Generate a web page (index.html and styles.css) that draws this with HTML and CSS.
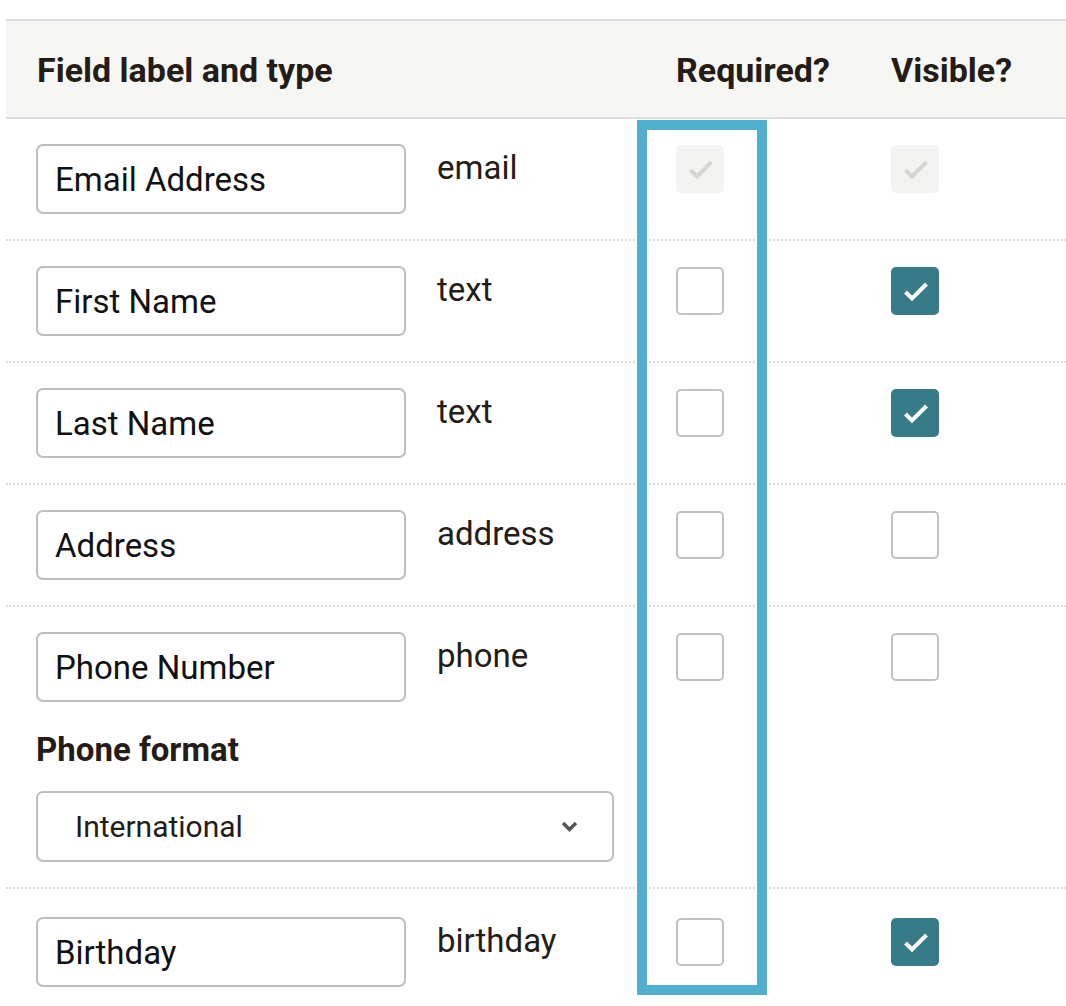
FILE: index.html
```html
<!DOCTYPE html>
<html lang="en">
<head>
<meta charset="utf-8">
<title>Form fields</title>
<link rel="stylesheet" href="styles.css">
</head>
<body>
<div class="form-table">
  <div class="thead">
    <div class="th th-label">Field label and type</div>
    <div class="th">Required?</div>
    <div class="th">Visible?</div>
  </div>

  <div class="row">
    <div class="cell label-cell">
      <div class="field-line"><div class="text-input">Email Address</div><span class="type">email</span></div>
    </div>
    <div class="cell"><span class="cb cb-disabled"><svg class="check" viewBox="0 0 48 48"><path d="M14.5 25 L21 31.5 L35.5 17"/></svg></span></div>
    <div class="cell"><span class="cb cb-disabled"><svg class="check" viewBox="0 0 48 48"><path d="M14.5 25 L21 31.5 L35.5 17"/></svg></span></div>
  </div>

  <div class="row">
    <div class="cell label-cell">
      <div class="field-line"><div class="text-input">First Name</div><span class="type">text</span></div>
    </div>
    <div class="cell"><span class="cb"></span></div>
    <div class="cell"><span class="cb cb-checked"><svg class="check" viewBox="0 0 48 48"><path d="M14.5 25 L21 31.5 L35.5 17"/></svg></span></div>
  </div>

  <div class="row">
    <div class="cell label-cell">
      <div class="field-line"><div class="text-input">Last Name</div><span class="type">text</span></div>
    </div>
    <div class="cell"><span class="cb"></span></div>
    <div class="cell"><span class="cb cb-checked"><svg class="check" viewBox="0 0 48 48"><path d="M14.5 25 L21 31.5 L35.5 17"/></svg></span></div>
  </div>

  <div class="row">
    <div class="cell label-cell">
      <div class="field-line"><div class="text-input">Address</div><span class="type">address</span></div>
    </div>
    <div class="cell"><span class="cb"></span></div>
    <div class="cell"><span class="cb"></span></div>
  </div>

  <div class="row">
    <div class="cell label-cell">
      <div class="field-line"><div class="text-input">Phone Number</div><span class="type">phone</span></div>
      <div class="sub-label">Phone format</div>
      <div class="select">
        <span>International</span>
        <svg class="chevron" viewBox="0 0 17 11"><path d="M2 2 L8.5 8.5 L15 2"/></svg>
      </div>
    </div>
    <div class="cell"><span class="cb"></span></div>
    <div class="cell"><span class="cb"></span></div>
  </div>

  <div class="row row-last">
    <div class="cell label-cell">
      <div class="field-line"><div class="text-input">Birthday</div><span class="type">birthday</span></div>
    </div>
    <div class="cell"><span class="cb"></span></div>
    <div class="cell"><span class="cb cb-checked"><svg class="check" viewBox="0 0 48 48"><path d="M14.5 25 L21 31.5 L35.5 17"/></svg></span></div>
  </div>

  <div class="highlight"></div>
</div>
</body>
</html>
```

FILE: styles.css
```css
html, body {
  margin: 0;
  padding: 0;
  background: #ffffff;
}

body {
  font-family: Roboto, "Liberation Sans", Arial, sans-serif;
  color: #241c15;
}

.form-table {
  position: relative;
  margin: 19px 0 0 6px;
}

.thead,
.row {
  display: grid;
  grid-template-columns: 670px 215px 1fr;
}

.thead {
  background: #f6f6f4;
  border-top: 2px solid #dedede;
  border-bottom: 2px solid #dedede;
  height: 96px;
  align-items: center;
}

.th {
  font-size: 34px;
  font-weight: 700;
  line-height: 40px;
  margin-top: 2px;
  color: #241c15;
}

.th-label {
  padding-left: 31px;
}

.row {
  padding: 25px 0;
  border-bottom: 2px dotted #dcdcdc;
  align-items: start;
}

.row-last {
  padding-top: 28px;
  border-bottom: none;
}

.label-cell {
  padding-left: 30px;
}

.field-line {
  display: flex;
  align-items: flex-start;
  gap: 31px;
}

.text-input {
  box-sizing: border-box;
  width: 370px;
  height: 70px;
  border: 2px solid #bebebe;
  border-radius: 7px;
  padding: 0 17px;
  display: flex;
  align-items: center;
  font-size: 33px;
  color: #111111;
}

.type {
  font-size: 33px;
  line-height: 48px;
  color: #241c15;
}

.sub-label {
  margin-top: 27px;
  font-size: 33px;
  font-weight: 700;
  line-height: 42px;
  color: #241c15;
}

.select {
  box-sizing: border-box;
  width: 578px;
  height: 71px;
  margin-top: 20px;
  border: 2px solid #bebebe;
  border-radius: 7px;
  padding: 0 34px 0 37px;
  display: flex;
  align-items: center;
  justify-content: space-between;
  font-size: 30px;
  color: #241c15;
}

.chevron {
  width: 17px;
  height: 11px;
  fill: none;
  stroke: #555555;
  stroke-width: 3.4;
}

.cb {
  box-sizing: border-box;
  display: block;
  width: 48px;
  height: 48px;
  margin-top: 1px;
  border: 2px solid #c4c0bc;
  border-radius: 5px;
  background: #ffffff;
}

.cb-checked {
  background: #367b87;
  border-color: #367b87;
}

.cb-disabled {
  background: #f3f3f1;
  border-color: #f3f3f1;
}

.check {
  display: block;
  width: 48px;
  height: 48px;
  margin: -2px;
  fill: none;
  stroke-width: 4;
}

.cb-checked .check {
  stroke: #ffffff;
}

.cb-disabled .check {
  stroke: #d7d6d3;
}

.highlight {
  position: absolute;
  left: 631px;
  top: 101px;
  width: 130px;
  height: 875px;
  box-sizing: border-box;
  border: 10px solid #50aecf;
  pointer-events: none;
}
```
